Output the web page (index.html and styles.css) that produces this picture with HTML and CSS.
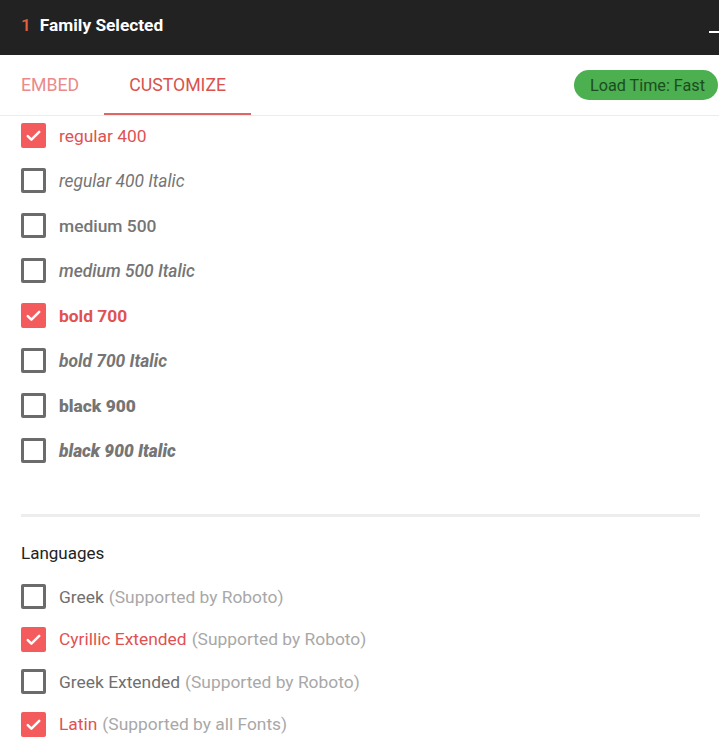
FILE: index.html
```html
<!DOCTYPE html>
<html>
<head>
<meta charset="utf-8">
<link rel="stylesheet" href="styles.css">
</head>
<body>
<div class="topbar">
  <span class="count">1</span>
  <span class="title">Family Selected</span>
  <span class="minimize"></span>
</div>
<div class="tabs">
  <div class="tab">EMBED</div>
  <div class="tab active">CUSTOMIZE</div>
  <div class="spacer"></div>
  <div class="pill">Load Time: Fast</div>
</div>
<div class="content">
  <ul class="styles">
    <li class="row on"><span class="box"><svg viewBox="0 0 24 24"><path d="M6.5 12.5l3.5 3.5 7.5-7.5"/></svg></span><span class="w400">regular 400</span></li>
    <li class="row"><span class="box"></span><span class="w400 it">regular 400 Italic</span></li>
    <li class="row"><span class="box"></span><span class="w500">medium 500</span></li>
    <li class="row"><span class="box"></span><span class="w500 it">medium 500 Italic</span></li>
    <li class="row on"><span class="box"><svg viewBox="0 0 24 24"><path d="M6.5 12.5l3.5 3.5 7.5-7.5"/></svg></span><span class="w700">bold 700</span></li>
    <li class="row"><span class="box"></span><span class="w700 it">bold 700 Italic</span></li>
    <li class="row"><span class="box"></span><span class="w900">black 900</span></li>
    <li class="row"><span class="box"></span><span class="w900 it">black 900 Italic</span></li>
  </ul>
  <div class="divider"></div>
  <h3 class="heading">Languages</h3>
  <ul class="langs">
    <li class="row"><span class="box"></span><span class="lname">Greek</span><span class="note">(Supported by Roboto)</span></li>
    <li class="row on"><span class="box"><svg viewBox="0 0 24 24"><path d="M6.5 12.5l3.5 3.5 7.5-7.5"/></svg></span><span class="lname">Cyrillic Extended</span><span class="note">(Supported by Roboto)</span></li>
    <li class="row"><span class="box"></span><span class="lname">Greek Extended</span><span class="note">(Supported by Roboto)</span></li>
    <li class="row on"><span class="box"><svg viewBox="0 0 24 24"><path d="M6.5 12.5l3.5 3.5 7.5-7.5"/></svg></span><span class="lname">Latin</span><span class="note">(Supported by all Fonts)</span></li>
  </ul>
</div>
</body>
</html>
```
FILE: styles.css
```css
* { box-sizing: border-box; }
html, body { margin: 0; padding: 0; background: #fff; }
body { font-family: Roboto, "Noto Sans", sans-serif; overflow: hidden; }

.topbar {
  height: 55px;
  background: #222222;
  display: flex;
  align-items: center;
  padding-left: 21px;
  padding-bottom: 5px;
  position: relative;
}
.count { color: #e4613f; font-size: 17.3px; font-weight: 500; margin-right: 9px; }
.title { color: #fff; font-size: 17.3px; font-weight: 700; }
.minimize {
  position: absolute;
  right: 0;
  top: 31px;
  width: 10px;
  height: 2px;
  background: #fff;
}

.tabs {
  height: 61px;
  display: flex;
  align-items: stretch;
  border-bottom: 1px solid #ececec;
}
.tab {
  display: flex;
  align-items: center;
  padding: 1px 25px 0;
  font-size: 17.7px;
  color: #d9534f;
  border-bottom: 2px solid transparent;
}
.tab:first-child { padding-left: 21px; padding-right: 25px; color: #ea8a8a; }
.tab.active { border-bottom-color: #e06666; }
.spacer { flex: 1; }
.pill {
  align-self: flex-start;
  margin-top: 15px;
  height: 30px;
  padding: 0 13px 0 16px;
  border-radius: 15px;
  background: #4caf50;
  color: #1b4d1e;
  font-size: 16.2px;
  display: flex;
  align-items: center;
  margin-right: 1px;
}

.content { padding: 0 19px 0 21px; }
ul { list-style: none; margin: 0; padding: 0; }
.row { display: flex; align-items: center; height: 25px; }
.box {
  width: 25px;
  height: 25px;
  border: 3px solid #6b6b6b;
  border-radius: 2px;
  margin-right: 13px;
  flex: none;
  display: flex;
  align-items: center;
  justify-content: center;
}
.row.on .box { border: none; background: #f45b5d; }
.box svg { width: 25px; height: 25px; fill: none; stroke: #fff; stroke-width: 2.4; stroke-linecap: round; stroke-linejoin: round; }

.styles { padding-top: 7px; display: flex; flex-direction: column; gap: 20px; }
.styles .row { font-size: 17.4px; color: #757575; }
.styles .row.on { color: #e05252; }
.w400 { font-weight: 400; }
.w500 { font-weight: 500; }
.w700 { font-weight: 700; }
.w900 { font-weight: 900; }
.it { font-style: italic; }

.divider { height: 3px; background: #ededed; margin-top: 51px; }
.heading { margin: 26px 0 0; font-size: 17px; font-weight: 400; color: #222; line-height: 20px; }

.langs { margin-top: 21px; display: flex; flex-direction: column; gap: 17.5px; }
.langs .row { font-size: 17.4px; }
.lname { color: #6f6f6f; margin-right: 5px; }
.row.on .lname { color: #e05252; }
.note { color: #a8a8a8; }
```
